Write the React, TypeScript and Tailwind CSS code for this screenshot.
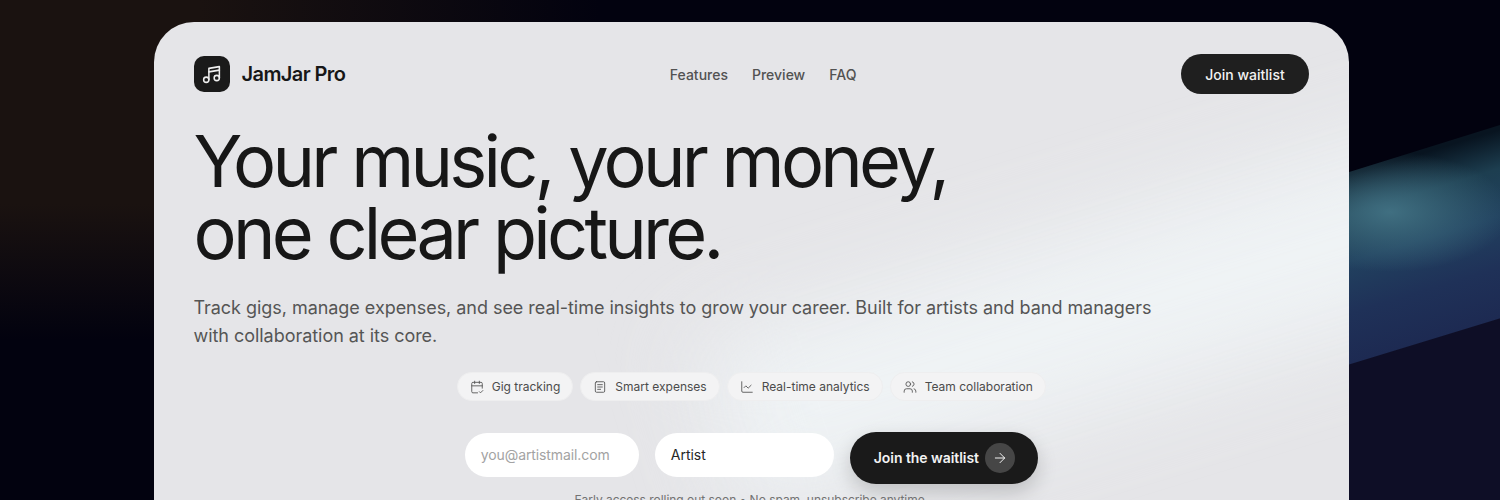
import { ArrowRight, CalendarCheck2, ChartLine, Music4, Users } from "lucide-react";

function NoteIcon({ size, strokeWidth, className }: { size: number; strokeWidth: number; className?: string }) {
  return (
    <svg width={size} height={size} viewBox="0 0 24 24" fill="none" stroke="currentColor" strokeWidth={strokeWidth} strokeLinecap="round" strokeLinejoin="round" className={className}>
      <rect x="4" y="3" width="16" height="18" rx="2" />
      <path d="M8 8h8M8 12h8M8 16h5" />
    </svg>
  );
}

const chips = [
  { label: "Gig tracking", Icon: CalendarCheck2 },
  { label: "Smart expenses", Icon: NoteIcon },
  { label: "Real-time analytics", Icon: ChartLine },
  { label: "Team collaboration", Icon: Users },
];

export default function App() {
  return (
    <div className="relative h-[500px] w-[1500px] overflow-hidden bg-[#02020f] font-['Inter',sans-serif]">
      <div className="absolute left-0 top-0 h-[340px] w-[300px] bg-[linear-gradient(180deg,#1a1210_0%,#1a1210_60%,#02020f_100%)]" />
      <div className="absolute left-[200px] top-0 h-[200px] w-[400px] bg-[linear-gradient(90deg,#1a1210,#02020f)]" />
      <div className="absolute left-[1330px] top-[100px] h-[400px] w-[170px] bg-[radial-gradient(ellipse_120px_60px_at_60px_112px,#406f81_0%,rgba(64,111,129,0)_100%),linear-gradient(163deg,#081420_78px,#1d3e50_115px,#21415f_160px,#1f3158_210px,#1d2a52_258px,#0e0e26_259px)] [clip-path:polygon(0_78px,170px_25px,170px_400px,0_400px)]" />

      <div className="relative mt-[22px] ml-[153.5px] h-[520px] w-[1195.5px] overflow-hidden rounded-[40px] bg-[#e5e5e8] px-[40px] pt-[32px]">
        <div className="absolute left-[547px] top-[178px] h-[170px] w-[1000px] -rotate-[17deg] bg-[#eff3f5] blur-[45px]" />
        <div className="relative">
          <header className="flex h-[40px] items-center justify-between">
            <div className="flex items-center gap-3">
              <div className="flex h-9 w-9 items-center justify-center rounded-[10px] bg-[#1a1a1a] text-[#eeeeee]">
                <Music4 size={21} strokeWidth={1.75} />
              </div>
              <span className="text-[20px] font-semibold tracking-[-0.6px] text-[#171717]">JamJar Pro</span>
            </div>
            <nav className="flex translate-y-px gap-6 text-sm font-medium text-[#525252]">
              <span>Features</span>
              <span>Preview</span>
              <span>FAQ</span>
            </nav>
            <button className="flex h-[40px] w-[128px] items-center justify-center rounded-full bg-[#1f1f1f] text-sm font-medium text-[#f2f2f2]">
              <span className="translate-y-px">Join waitlist</span>
            </button>
          </header>

          <h1 className="mt-[31px] text-[72px] font-normal leading-[72px] tracking-[-3.75px] text-[#171717]">
            Your music, your money,
            <br />
            one clear picture.
          </h1>

          <p className="mt-[25px] w-[980px] text-lg leading-[28px] tracking-[-0.04px] text-[#555555]">
            Track gigs, manage expenses, and see real-time insights to grow your career. Built for artists and band managers with collaboration at its core.
          </p>

          <div className="mt-[22px] flex justify-center gap-[7px]">
            {chips.map(({ label, Icon }) => (
              <div key={label} className="flex h-[29px] items-center gap-2 rounded-full border border-[#eeeeef] bg-[#f3f3f4] px-3 text-xs font-normal text-[#4b4b4b]">
                <Icon size={14} strokeWidth={1.5} className="text-[#525252]" />
                <span>{label}</span>
              </div>
            ))}
          </div>

          <div className="mt-[32px] flex items-start justify-center gap-4">
            <div className="flex h-[44px] w-[174px] items-center rounded-full bg-white pl-4 text-sm tracking-[-0.1px] text-[#a3a3a3]">you@artistmail.com</div>
            <div className="flex h-[44px] w-[179px] items-center rounded-full bg-white pl-4 text-sm text-[#262626]">Artist</div>
            <button className="-mt-px flex h-[52px] w-[188px] items-center justify-between rounded-full bg-[#1a1a1a] pl-6 pr-[23px] text-sm font-semibold tracking-[-0.05px] text-[#f2f2f2] shadow-[0_8px_20px_rgba(0,0,0,0.18)]">
              <span>Join the waitlist</span>
              <span className="flex h-[30px] w-[30px] items-center justify-center rounded-full bg-[#464646]">
                <ArrowRight size={16} strokeWidth={1.5} />
              </span>
            </button>
          </div>

          <p className="pt-[8px] text-center text-xs tracking-[-0.03px] text-[#737373]">Early access rolling out soon • No spam, unsubscribe anytime.</p>
        </div>
      </div>
    </div>
  );
}
